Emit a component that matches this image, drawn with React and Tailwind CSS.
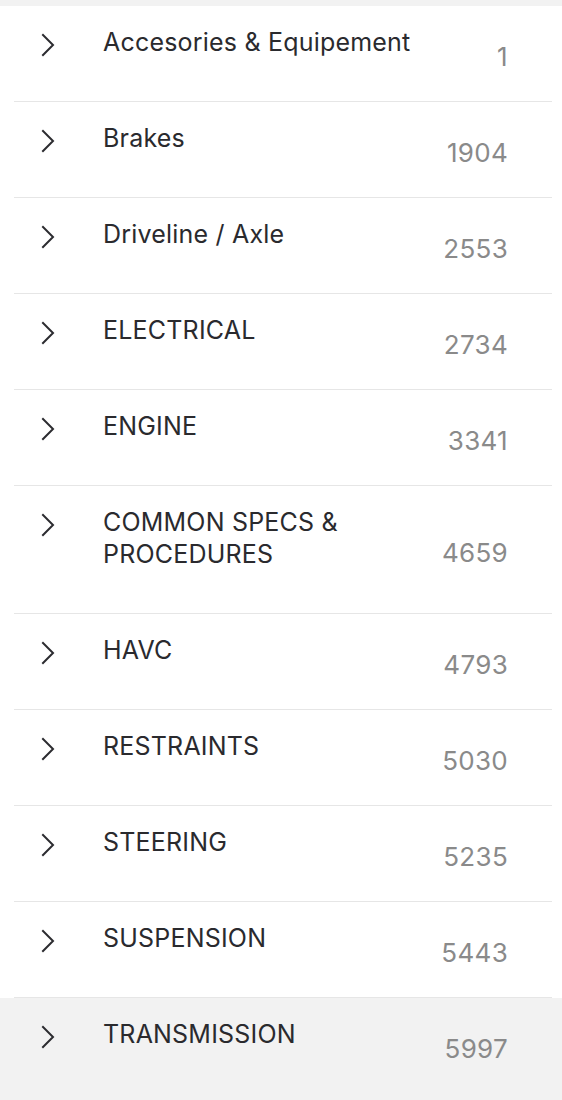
import { useState } from "react"

const categories = [
    { name: "Accesories & Equipement", count: 1 },
    { name: "Brakes", count: 1904 },
    { name: "Driveline / Axle", count: 2553 },
    { name: "ELECTRICAL", count: 2734 },
    { name: "ENGINE", count: 3341 },
    { name: "COMMON SPECS & PROCEDURES", count: 4659 },
    { name: "HAVC", count: 4793 },
    { name: "RESTRAINTS", count: 5030 },
    { name: "STEERING", count: 5235 },
    { name: "SUSPENSION", count: 5443 },
    { name: "TRANSMISSION", count: 5997 },
]

function Chevron() {
    return (
        <svg width="14" height="24" viewBox="0 0 14 24" fill="none" className="text-[#2c2c30]">
            <path d="M2 2 L12 12 L2 22" stroke="currentColor" strokeWidth="2" strokeLinecap="square" />
        </svg>
    )
}

export default function App() {
    const [active, setActive] = useState(categories.length - 1)

    return (
        <div className="w-[562px] min-h-[1100px] flex flex-col bg-white font-['Inter','Liberation_Sans',sans-serif]">
            <div className="h-[6px] shrink-0 bg-[#f2f2f2]" />
            <ul className="flex-1 flex flex-col">
                {categories.map((item, i) => (
                    <li
                        key={item.name}
                        onClick={() => setActive(i)}
                        className={`cursor-pointer last:flex-1 ${active === i ? "bg-[#f2f2f2]" : "bg-white"}`}
                    >
                        <div className={`ml-[14px] mr-[10px] flex ${i === categories.length - 1 ? "" : "border-b border-[#e6e6e6]"}`}>
                            <div className="w-[89px] shrink-0 pl-[27px] pt-[27px]">
                                <Chevron />
                            </div>
                            <div className="flex-1 pt-[20px] pb-[43px] pr-2 text-[25px] leading-[32px] tracking-[0.2px] text-[#2a2a2e]">
                                <span className="block max-w-[330px]">{item.name}</span>
                            </div>
                            <div className="flex items-center pr-[44px] pt-[5px] text-[26px] tracking-[0.3px] text-[#8a8a8a]">
                                {item.count}
                            </div>
                        </div>
                    </li>
                ))}
            </ul>
        </div>
    )
}
